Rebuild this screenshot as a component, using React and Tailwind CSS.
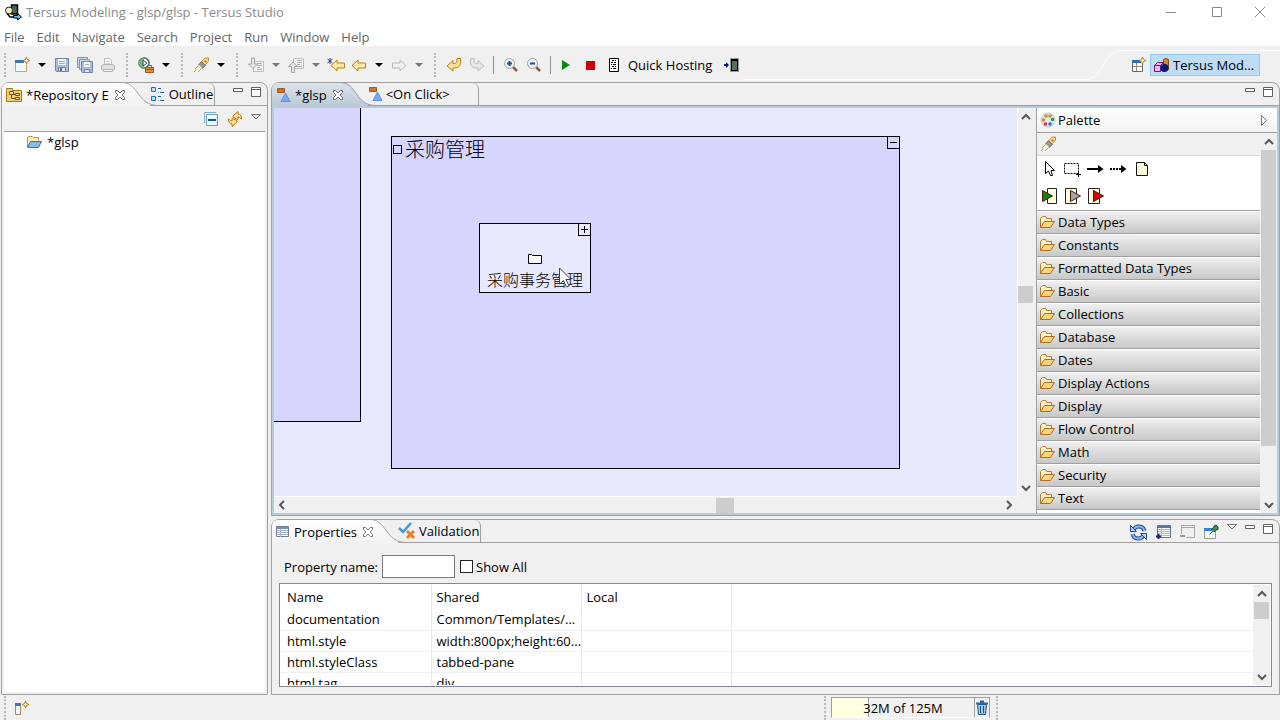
import clsx from 'clsx'

const Svg = ({ w = 16, h = 16, className, children }) => (
  <svg
    width={w}
    height={h}
    viewBox={`0 0 ${w} ${h}`}
    fill="none"
    aria-hidden="true"
    className={clsx('shrink-0', className)}
  >
    {children}
  </svg>
)

const Sparkle = ({ x, y }) => (
  <path
    d="M3.5 0L4.5 2.5L7 3.5L4.5 4.5L3.5 7L2.5 4.5L0 3.5L2.5 2.5Z"
    transform={`translate(${x} ${y})`}
    fill="#fff3c0"
    stroke="#b8801c"
  />
)

const AppIcon = () => (
  <Svg w={17}>
    <path d="M6.500 1h6v9h-6z" fill="#4a6a58" stroke="#000" strokeWidth="1.500" />
    <circle cx="4" cy="6.500" r="3.500" fill="#f6eab4" stroke="#222" />
    <path d="M2 9.500l3 3.500h5" stroke="#000" strokeWidth="1.500" />
    <path d="M8.500 11.500h4v-2l4 3.500-4 3v-2h-4z" fill="#6bb5f0" stroke="#000" />
  </Svg>
)

const NewIcon = () => (
  <Svg>
    <path d="M1.500 3.500h11v11h-11z" fill="#eef8ff" stroke="#c4a468" />
    <path d="M1 3h9v3H1z" fill="#3a78b8" />
    <path d="M2 6h10v2H2z" fill="#fff" />
    <Sparkle x={9} y={0} />
  </Svg>
)

const SaveIcon = () => (
  <Svg>
    <path d="M1.500 1.500h13v13h-12l-1-1z" fill="#a8bedc" stroke="#6e84a8" />
    <path d="M4 2h8v6H4z" fill="#f4f6f8" />
    <path d="M5 4.500h6M5 6.500h6" stroke="#a8acb4" />
    <path d="M4.500 10.500h7v4h-7z" fill="#e4e8ee" stroke="#6e84a8" />
    <path d="M6 11h2v3H6z" fill="#5c7298" />
  </Svg>
)

const SaveAllIcon = () => (
  <Svg>
    <path d="M.5 .5h10v10h-10z" fill="#c8d6e8" stroke="#8496b4" />
    <path d="M2.500 2.500h10v10h-10z" fill="#d8e2ee" stroke="#8496b4" />
    <path d="M4.500 4.500h11v11h-10l-1-1z" fill="#a8bedc" stroke="#6e84a8" />
    <path d="M7 5h6v5H7z" fill="#f4f6f8" />
    <path d="M8 7.500h4" stroke="#a8acb4" />
    <path d="M7.500 12.500h5v3h-5z" fill="#e4e8ee" stroke="#6e84a8" />
  </Svg>
)

const PrintIcon = () => (
  <Svg>
    <path d="M4.500 7.500v-6h5l2 2v4" fill="#fafafa" stroke="#bababa" />
    <path d="M6 4.500h4M6 6.500h4" stroke="#d0d0d0" />
    <path d="M1.500 8.500l2-1h9l2 1v4h-13z" fill="#e2e2e2" stroke="#b4b4b4" />
    <path d="M3.500 12.500h9v2h-9z" fill="#f4f4f4" stroke="#b4b4b4" />
  </Svg>
)

const RunExternalIcon = () => (
  <Svg>
    <circle cx="6" cy="6" r="5" fill="#fff" stroke="#3c6a54" strokeWidth="1.500" />
    <path d="M6 1a5 5 0 0 0 0 10z" fill="#7cb48c" />
    <path d="M5 3l4 3-4 3z" fill="#fff" stroke="#28503c" />
    <path d="M7.500 10.500h8v5h-8z" fill="#e09040" stroke="#a05420" />
    <path d="M9.500 10v-1.500h4V10M8 12.500h7" stroke="#a05420" />
  </Svg>
)

const RocketIcon = () => (
  <Svg>
    <path d="M9 4.500l3-3.500h3.500v3l-3 3.500-3 2L7 7z" fill="#fbd688" stroke="#d08c38" />
    <path d="M5.500 8l3-3.500 4 4L9 11.500z" fill="#98949c" stroke="#84705c" />
    <path d="M6 8l3 3-3.500 3L1 15l2-4.500z" fill="#fff6d0" />
    <path d="M5.500 8.500L2 12M8.500 11.500L5 15M3.500 12.500L1 15" stroke="#d89040" />
    <circle cx="12.500" cy="4.500" r="1" fill="#9c6844" />
  </Svg>
)

const AnnotationIcon = ({ up }) => (
  <Svg>
    <path d={up ? 'M5.500 1.500h10v10h-10z' : 'M5.500 4.500h10v10h-10z'} fill="#f4f4f4" stroke="#c0c0c0" />
    <path d={up ? 'M9 3.500h5M9 5.500h5M9 7.500h3M9 9.500h5' : 'M9 6.500h5M9 8.500h5M9 10.500h3M9 12.500h5'} stroke="#b0b0b0" />
    <path
      d={up ? 'M5 5L.5 9.500H3.500v6h3v-6h3z' : 'M3.500 1h3v6h3L5 11.500.5 7h3z'}
      fill="#e6e6e6"
      stroke="#a4a4a4"
    />
  </Svg>
)

const BackIcon = ({ star }) => (
  <Svg w={18}>
    <path
      d="M2 8.500L8 3v3h7.500v5H8v3z"
      transform={star ? 'translate(2 0)' : undefined}
      fill="#fdeaa4"
      stroke="#bc801c"
    />
    {star && <path d="M3 1v6M.5 2l5 4M5.500 2l-5 4" stroke="#283c80" />}
  </Svg>
)

const ForwardIcon = () => (
  <Svg>
    <path d="M15 8.500L9 3v3H1.500v5H9v3z" fill="#f0f0f0" stroke="#b8b8b8" />
  </Svg>
)

const ReturnIcon = ({ flip }) => (
  <Svg>
    <path
      d="M1 9l6-5.500v3h1.500q2.500 0 2.500-5h3.500q1.500 9.500-6 9.500H7V14z"
      transform={flip ? 'matrix(-1 0 0 1 16 0)' : undefined}
      fill={flip ? '#e6e6e6' : '#fce08c'}
      stroke={flip ? '#bcbcbc' : '#bc801c'}
    />
  </Svg>
)

const ZoomIcon = ({ minus }) => (
  <Svg>
    <path d="M10 10l4 4" stroke="#8a5a4c" strokeWidth="2.500" />
    <circle cx="6.500" cy="6.500" r="5" fill="#e8f2fa" stroke="#a8a098" />
    <path d={minus ? 'M4 6.500h5' : 'M4 6.500h5M6.500 4v5'} stroke="#1c4c94" strokeWidth="2" />
  </Svg>
)

const PlayIcon = () => (
  <Svg>
    <path d="M2 3l8 5-8 5z" fill="#0a8a0a" />
  </Svg>
)

const StopIcon = () => (
  <Svg>
    <path d="M3 4h9v9H3z" fill="#cc0000" />
  </Svg>
)

const ServerIcon = () => (
  <Svg w={12}>
    <path d="M1.500 1.500h9v13h-9z" fill="#fff" stroke="#000" />
    <path d="M4 3.500h2M7 3.500h1M3 5.500h2M6 5.500h2M3 7.500h1M5 7.500h3M4 9.500h2M7 9.500h1M3 11.500h1M5 11.500h3" stroke="#000" />
  </Svg>
)

const DoorIcon = () => (
  <Svg>
    <path d="M6.500 1.500h8v13h-8z" fill="#000" stroke="#999" />
    <path d="M8 4h5v9H8z" fill="#52705c" />
    <path d="M0 7h2V5l3 3-3 3V9H0z" fill="#001080" />
  </Svg>
)

const OpenPerspectiveIcon = () => (
  <Svg>
    <path d="M1.500 4.500h10v10h-10z" fill="#fff" stroke="#5c6c70" />
    <path d="M1 3h9v3H1z" fill="#3070b0" />
    <path d="M5.500 6v8M2 9.500h9" stroke="#988c78" />
    <Sparkle x={8} y={0} />
  </Svg>
)

const PerspectiveIcon = () => (
  <Svg w={17}>
    <path d="M10.500 2.500q2.500-2 5 0v10h-5z" fill="#d4862c" stroke="#8c4808" />
    <path d="M1.500 8.500l3-3h6v6l-3 3h-6z" fill="#eab8ea" stroke="#7c1478" />
    <path d="M1.500 8.500h6v6M7.500 8.500l3-3" stroke="#7c1478" />
    <circle cx="11.500" cy="11" r="4" fill="#0c1480" />
  </Svg>
)

const RepositoryIcon = () => (
  <Svg>
    <path d="M.5 3.500v-2h6v2h9v11H.5z" fill="#f4cf70" stroke="#a8781c" />
    <path d="M3.500 4.500h4v3h-4zM9.500 6.500h4v2h-4zM9.500 10.500h4v2h-4z" fill="#f8e8b8" stroke="#605428" />
    <path d="M5.500 8v3.500H9M6 7.500h3" stroke="#605428" />
  </Svg>
)

const OutlineIcon = () => (
  <Svg>
    <path d="M1.500 1.500h4v4h-4zM1.500 10.500h4v4h-4z" fill="#c0e0f4" stroke="#1874b4" />
    <path d="M8 2.500h3M10 6.500h4M8 10.500h3M10 14.500h4" stroke="#286090" />
    <path d="M8 6.500h1M8 14.500h1" stroke="#58aee0" />
  </Svg>
)

const CollapseIcon = () => (
  <Svg>
    <path d="M1.500 12V1.500H13" stroke="#88b0c4" />
    <path d="M3.500 3.500h11v11h-11z" fill="#e8f8ff" stroke="#7c9cb0" />
    <path d="M5 9h8" stroke="#0c5894" strokeWidth="2" />
  </Svg>
)

const LinkIcon = () => (
  <Svg>
    <path d="M6 6.500V5l5-4.500V3q4 1 3.500 5l-2-1.500L11 6v2.500z" fill="#fbe08c" stroke="#b87c18" />
    <path d="M10 9.500V11l-5 4.500V13Q1 12 1.500 8l2 1.500L5 10V7.500z" fill="#fbe08c" stroke="#b87c18" />
  </Svg>
)

const ProjectIcon = () => (
  <Svg>
    <path d="M1.500 13V3.500l1-1h4l1 1h5v3" fill="#fceec0" stroke="#b8904c" />
    <path d="M1.500 13.500l3-6h11l-3 6z" fill="#88bce8" stroke="#3c70a8" />
  </Svg>
)

const ModelIcon = () => (
  <Svg w={15}>
    <path d="M1.500 1.500h7v4h-7z" fill="#c8742c" stroke="#a4581c" />
    <path d="M9.500 6l4.500 8.500h-9z" fill="#78a8f8" stroke="#6090e4" />
  </Svg>
)

const CloseIcon = () => (
  <Svg w={12} h={12}>
    <path
      d="M1.500 1.500h2l2.500 2.500 2.500-2.500h2v2L8 6l2.500 2.500v2h-2L6 8l-2.500 2.500h-2v-2L4 6 1.500 3.500z"
      fill="#fff"
      stroke="#707070"
    />
  </Svg>
)

const MinimizeIcon = () => (
  <Svg w={10} h={10}>
    <path d="M.5 1.500h9v3h-9z" fill="#fff" stroke="#606060" />
  </Svg>
)

const MaximizeIcon = () => (
  <Svg w={10} h={10}>
    <path d="M.5 .5h9v9h-9zM1 2.500h8" fill="#fff" stroke="#606060" />
  </Svg>
)

const ViewMenuIcon = () => (
  <Svg w={10} h={10}>
    <path d="M.5 .5h9L5 5z" fill="#fff" stroke="#707070" />
  </Svg>
)

const PaletteIcon = () => (
  <Svg>
    <circle cx="8" cy="8" r="7" fill="#dcebf6" stroke="#b4cce0" />
    <g strokeWidth="1.500" fill="#fff">
      <circle cx="6" cy="4" r="1" stroke="#d4881c" />
      <circle cx="10" cy="4" r="1" stroke="#d4881c" />
      <circle cx="3.500" cy="8" r="1" stroke="#d4881c" />
      <circle cx="12.500" cy="7.500" r="1" stroke="#388c38" />
      <circle cx="5.500" cy="12" r="1" stroke="#d03030" />
      <circle cx="10" cy="12" r="1" stroke="#3060c0" />
    </g>
  </Svg>
)

const FolderIcon = () => (
  <Svg>
    <path d="M1.500 13.500v-9l2-2h3l1 2h5v3" fill="#fff2c4" stroke="#bc7830" />
    <path d="M1.500 13.500l4-6h10l-4 6z" fill="#fcd47c" stroke="#b06c24" />
  </Svg>
)

const PointerIcon = () => (
  <Svg>
    <path d="M3.500 .5v12l3-2.500L8.500 14.500h2L9 9.500h3.500z" fill="#fff" stroke="#000" />
  </Svg>
)

const MarqueeIcon = () => (
  <Svg w={20}>
    <path d="M1.500 2.500h14v10h-14z" stroke="#000" strokeDasharray="2 1" />
    <path d="M13 13.500h5M15.500 11v5" stroke="#000" />
  </Svg>
)

const FlowIcon = ({ dashed }) => (
  <Svg w={17}>
    <path d="M0 8h12" stroke="#000" strokeWidth="2" strokeDasharray={dashed ? '2 1' : undefined} />
    <path d="M11 4l5.500 4-5.500 4z" fill="#000" />
  </Svg>
)

const NoteIcon = () => (
  <Svg>
    <path d="M2.500 1.500h8l3 3v10h-11zM10.500 1.500v3h3" fill="#ffffe0" stroke="#111" />
  </Svg>
)

const BOX_RIGHT = 'M6.500 .5h9v15h-9z'
const BOX_LEFT = 'M1.500 .5h11v15h-11z'

const SlotIcon = ({ fill, box }) => (
  <Svg w={17}>
    <path d={box} fill="#ffffe0" stroke="#222" />
    <path
      d={box === BOX_RIGHT ? 'M1.500 2.500l10 5.500-10 5.500z' : 'M6.500 2.500l10 5.500-10 5.500z'}
      fill={fill}
      stroke="#501818"
    />
  </Svg>
)

const TableIcon = () => (
  <Svg w={14} h={12}>
    <path d="M.5 .5h12v10H.5z" fill="#fff" stroke="#707c90" />
    <path d="M1 2h11" stroke="#7c90b0" strokeWidth="2" />
    <path d="M1 4.500h11M1 6.500h11M1 8.500h11M4.500 3v8" stroke="#a4b0c4" />
  </Svg>
)

const ValidationIcon = () => (
  <Svg w={18} h={18}>
    <path d="M1 6l4 4 8-9" stroke="#3c98dc" strokeWidth="2.500" />
    <path d="M9 9l7 7M16 9l-7 7" stroke="#dc8430" strokeWidth="3" />
  </Svg>
)

const RefreshIcon = () => (
  <Svg w={17} h={17}>
    <path d="M3.500 6A5.800 5.800 0 0 1 14.500 7M13.500 11A5.800 5.800 0 0 1 2.500 10" stroke="#24489c" strokeWidth="4" />
    <path d="M3.500 6A5.800 5.800 0 0 1 14.500 7M13.500 11A5.800 5.800 0 0 1 2.500 10" stroke="#88b8ec" strokeWidth="2" />
    <path d="M.5 1.500v6h6zM16.500 15.500v-6h-6z" fill="#b8d4f4" stroke="#24489c" />
  </Svg>
)

const AddPropertyIcon = () => (
  <Svg>
    <path d="M2.500 1.500h13v12h-13z" fill="#fff" stroke="#607898" />
    <path d="M3 3h12" stroke="#5878a4" strokeWidth="2" />
    <path d="M3 5.500h12M3 7.500h12M3 9.500h12M3 11.500h12M6.500 4v9" stroke="#b0b8c8" />
    <path d="M1 12.500h5M3.500 10v5" stroke="#1c2484" strokeWidth="2" />
  </Svg>
)

const RemovePropertyIcon = () => (
  <Svg>
    <path d="M2.500 10V1.500h13v12H7M3 3.500h12" stroke="#a8a8a8" />
    <path d="M1 12h5" stroke="#989898" strokeWidth="2" />
  </Svg>
)

const PinIcon = () => (
  <Svg>
    <path d="M1.500 4.500h11v10h-11z" fill="#ecf6ff" stroke="#a89c80" />
    <path d="M1 4h8v3H1z" fill="#3c80d0" />
    <path d="M6.500 10.500L10 7" stroke="#444" />
    <path d="M8.500 5l3 3 1.500-2 2-.5V3l-2-2-2 1-.5 1.500z" fill="#3c9048" stroke="#244c30" />
  </Svg>
)

const TrashIcon = () => (
  <Svg w={14}>
    <path d="M2.500 4.500h9l-1 10h-7z" fill="#a8c8dc" stroke="#1c508c" />
    <path d="M1 3.500h12M5 1.500h4" stroke="#2868a8" strokeWidth="2" />
    <path d="M5.500 6v7M8.500 6v7" stroke="#1c508c" />
  </Svg>
)

const FastViewIcon = () => (
  <Svg>
    <path d="M1.500 3.500h5v11h-5z" fill="#f0f8ff" stroke="#a08c68" />
    <path d="M1 3h6v3H1z" fill="#3c78b4" />
    <Sparkle x={8} y={1} />
  </Svg>
)

const Handle = ({ className }) => (
  <span className={clsx('flex shrink-0 justify-center', className)}>
    <span className="h-6 border-l-2 border-dotted border-[#b8b8b8]" />
  </span>
)

const ToolButton = ({ label, icon: Icon, ...props }) => (
  <button type="button" aria-label={label} className="flex h-6 w-[23px] shrink-0 items-center justify-center">
    <Icon {...props} />
  </button>
)

const DropButton = ({ label, muted }) => (
  <button type="button" aria-label={label} className="flex h-6 w-[17px] shrink-0 items-center justify-center">
    <span
      className={clsx(
        'border-x-4 border-t-4 border-x-transparent',
        muted ? 'border-t-[#777777]' : 'border-t-black'
      )}
    />
  </button>
)

const ViewButton = ({ label, icon: Icon }) => (
  <button type="button" aria-label={label} className="shrink-0">
    <Icon />
  </button>
)

const TitleBar = () => (
  <header className="flex h-7 shrink-0 items-start bg-white text-[#8a8a8a]">
    <div className="flex h-6 flex-1 items-center gap-1 pl-[5px]">
      <AppIcon />
      <h1>Tersus Modeling - glsp/glsp - Tersus Studio</h1>
    </div>
    <div className="flex h-6 items-center">
      <button type="button" aria-label="Minimize window" className="flex w-[46px] justify-center">
        <Svg w={10} h={10}><path d="M0 5.500h10" stroke="#888" /></Svg>
      </button>
      <button type="button" aria-label="Maximize window" className="flex w-[46px] justify-center">
        <Svg w={10} h={10}><path d="M.5 .5h9v9h-9z" stroke="#888" /></Svg>
      </button>
      <button type="button" aria-label="Close window" className="flex w-10 justify-center">
        <Svg w={10} h={10}><path d="M0 0l10 10M10 0L0 10" stroke="#888" /></Svg>
      </button>
    </div>
  </header>
)

const menus = ['File', 'Edit', 'Navigate', 'Search', 'Project', 'Run', 'Window', 'Help']

const MenuBar = () => (
  <nav className="flex h-[18px] shrink-0 items-center gap-3 bg-white pl-1 text-[#666666]">
    {menus.map((menu) => (
      <button key={menu} type="button">{menu}</button>
    ))}
  </nav>
)

const Toolbar = () => (
  <div className="flex h-9 shrink-0">
    <div className="flex shrink-0 items-center pt-[2px]">
      <Handle className="w-[10px]" />
      <ToolButton label="New" icon={NewIcon} />
      <DropButton label="New menu" />
      <ToolButton label="Save" icon={SaveIcon} />
      <ToolButton label="Save all" icon={SaveAllIcon} />
      <ToolButton label="Print" icon={PrintIcon} />
      <Handle className="w-[15px]" />
      <ToolButton label="External tools" icon={RunExternalIcon} />
      <DropButton label="External tools menu" />
      <Handle className="w-[15px]" />
      <ToolButton label="Launch" icon={RocketIcon} />
      <DropButton label="Launch menu" />
      <Handle className="w-[15px]" />
      <ToolButton label="Next annotation" icon={AnnotationIcon} />
      <DropButton label="Next annotation menu" muted />
      <ToolButton label="Previous annotation" icon={AnnotationIcon} up />
      <DropButton label="Previous annotation menu" muted />
      <ToolButton label="Last edit location" icon={BackIcon} star />
      <ToolButton label="Back" icon={BackIcon} />
      <DropButton label="Back menu" />
      <ToolButton label="Forward" icon={ForwardIcon} />
      <DropButton label="Forward menu" muted />
      <Handle className="w-[15px]" />
      <ToolButton label="Undo" icon={ReturnIcon} />
      <ToolButton label="Redo" icon={ReturnIcon} flip />
      <span className="mx-[5px] h-[18px] border-l border-[#909090]" />
      <ToolButton label="Zoom in" icon={ZoomIcon} />
      <ToolButton label="Zoom out" icon={ZoomIcon} minus />
      <span className="mx-[5px] h-[18px] border-l border-[#909090]" />
      <ToolButton label="Start" icon={PlayIcon} />
      <ToolButton label="Stop" icon={StopIcon} />
      <button type="button" className="mr-2 ml-[6px] flex h-6 shrink-0 items-center gap-2">
        <ServerIcon />
        Quick Hosting
      </button>
      <ToolButton label="Exit" icon={DoorIcon} />
    </div>
    <PerspectiveBar />
  </div>
)

const PerspectiveBar = () => (
  <div className="flex h-9 min-w-0 flex-1">
    <div className="h-[34px] flex-1 border-b border-white" />
    <Svg w={38} h={36}>
      <path d="M0 33.500C21 33.500 15 4.500 38 4.500" stroke="#fff" />
    </Svg>
    <div className="mt-1 flex items-center gap-[3px] border-t border-white pr-5 pb-1 pl-2">
      <button type="button" aria-label="Open perspective"><OpenPerspectiveIcon /></button>
      <button
        type="button"
        className="flex h-[22px] w-[110px] items-center gap-[3px] border border-[#90c8f6] bg-[#c0dcf3] pl-[2px]"
      >
        <PerspectiveIcon />
        <span>Tersus Mod...</span>
      </button>
    </div>
  </div>
)

const TabCurve = ({ from, to, id }) => (
  <Svg w={36} h={23} className="-ml-1">
    <defs>
      <linearGradient id={id} x1="0" y1="0" x2="0" y2="1">
        <stop offset="0" stopColor={from} />
        <stop offset="1" stopColor={to} />
      </linearGradient>
    </defs>
    <path d="M4-.5C17-.5 15 22.500 36 22.500V23H4z" fill={`url(#${id})`} />
    <path d="M0-.5C17-.5 15 22.500 36 22.500" stroke="#a0a0a0" />
  </Svg>
)

const TabBar = ({ id, active, activeIcon, inactive, inactiveIcon, tone, children }) => (
  <div className="flex h-[23px] shrink-0">
    <div
      className={clsx(
        'flex items-center gap-1 rounded-tl-md pl-1',
        tone === 'blue' ? 'bg-linear-to-b from-[#dbe3eb] to-[#b9cad8]' : 'bg-linear-to-b from-white to-[#f2f2f2]'
      )}
    >
      {activeIcon}
      <span>{active}</span>
      <button type="button" aria-label={`Close ${active}`} className="ml-px">
        <CloseIcon />
      </button>
    </div>
    {tone === 'blue' ? (
      <TabCurve id={id} from="#dbe3eb" to="#b9cad8" />
    ) : (
      <TabCurve id={id} from="#ffffff" to="#f2f2f2" />
    )}
    <div
      className={clsx(
        '-ml-2 flex items-center gap-[3px] rounded-tr-md border-r border-b border-[#a0a0a0]',
        tone === 'blue' ? 'pr-7' : 'pr-px'
      )}
    >
      {inactiveIcon}
      <span>{inactive}</span>
    </div>
    <div className="flex flex-1 items-start justify-end gap-2 border-b border-[#a0a0a0] pt-1 pr-[6px]">
      {children}
    </div>
  </div>
)

const RepositoryView = () => (
  <section className="ml-px flex w-[267px] shrink-0 flex-col rounded-t-lg border border-[#a0a0a0]">
    <TabBar
      id="repository-tab"
      active="*Repository E"
      activeIcon={<RepositoryIcon />}
      inactive="Outline"
      inactiveIcon={<OutlineIcon />}
    >
      <ViewButton label="Minimize view" icon={MinimizeIcon} />
      <ViewButton label="Maximize view" icon={MaximizeIcon} />
    </TabBar>
    <div className="mx-[2px] flex h-[26px] items-center justify-end gap-2 border-b border-[#a0a0a0] pr-1">
      <ViewButton label="Collapse all" icon={CollapseIcon} />
      <ViewButton label="Link with editor" icon={LinkIcon} />
      <ViewButton label="View menu" icon={ViewMenuIcon} />
    </div>
    <ul className="mx-[2px] mb-[2px] flex-1 bg-white">
      <li className="flex h-5 items-center gap-[5px] pl-[22px]">
        <ProjectIcon />
        *glsp
      </li>
    </ul>
  </section>
)

const arrowPaths = {
  up: 'M1 6l4-4 4 4',
  down: 'M1 2l4 4 4-4',
  left: 'M6 1L2 5l4 4',
  right: 'M2 1l4 4-4 4',
}

const ScrollArrow = ({ direction }) => {
  const vertical = direction === 'up' || direction === 'down'
  return (
    <button
      type="button"
      aria-label={`Scroll ${direction}`}
      className="flex h-[17px] w-4 shrink-0 items-center justify-center"
    >
      <Svg w={vertical ? 10 : 8} h={vertical ? 8 : 10}>
        <path d={arrowPaths[direction]} stroke="#585858" strokeWidth="2" />
      </Svg>
    </button>
  )
}

const ShapeToggle = ({ expanded, label }) => (
  <button
    type="button"
    aria-label={label}
    className={clsx(
      'absolute -top-px -right-px size-[13px] border border-black',
      expanded ? 'bg-[#d5d5fd]' : 'bg-[#e9e9fd]'
    )}
  >
    <Svg w={11} h={11}>
      <path d={expanded ? 'M2 5.500h7' : 'M2 5.500h7M5.500 2v7'} stroke="#000" />
    </Svg>
  </button>
)

const Diagram = () => (
  <div className="relative min-h-0 flex-1 overflow-hidden bg-[#e9e9fd] font-['Noto_Sans_CJK_SC',sans-serif] font-light">
    <div className="absolute -top-1 -left-1 h-[318px] w-[91px] border border-black bg-[#d5d5fd]" />
    <div className="absolute top-7 left-[117px] h-[333px] w-[509px] border border-black bg-[#d5d5fd]">
      <div className="flex h-6 items-center gap-[3px] pl-px text-[20px]">
        <span className="size-[9px] border border-black" />
        采购管理
      </div>
      <ShapeToggle expanded label="Collapse 采购管理" />
      <div className="absolute top-[86px] left-[87px] flex h-[70px] w-[112px] flex-col items-center justify-end border border-black bg-[#e9e9fd] pb-px">
        <ShapeToggle label="Expand 采购事务管理" />
        <Svg w={14} h={12} className="mb-[2px]">
          <path d="M.5 10.500v-9h3l1 1h9v8z" fill="#fff" stroke="#000" />
        </Svg>
        <span className="text-[16px] leading-6">采购事务管理</span>
        <svg
          width="13"
          height="21"
          viewBox="0 0 13 21"
          aria-hidden="true"
          className="absolute top-[43px] left-[79px]"
        >
          <path d="M.5 1v16l4-3.500 3 6.500 2.500-1-3-6.500H12z" fill="#fff" stroke="#444" />
        </svg>
      </div>
    </div>
  </div>
)

const toolRows = [
  [
    { label: 'Select', icon: <PointerIcon /> },
    { label: 'Marquee', icon: <MarqueeIcon /> },
    { label: 'Flow', icon: <FlowIcon /> },
    { label: 'Link', icon: <FlowIcon dashed /> },
    { label: 'Note', icon: <NoteIcon /> },
  ],
  [
    { label: 'Trigger', icon: <SlotIcon fill="#0a840a" box={BOX_RIGHT} /> },
    { label: 'Exit', icon: <SlotIcon fill="#a4a4a4" box={BOX_LEFT} /> },
    { label: 'Error', icon: <SlotIcon fill="#d40808" box={BOX_LEFT} /> },
  ],
]

const drawers = [
  'Data Types',
  'Constants',
  'Formatted Data Types',
  'Basic',
  'Collections',
  'Database',
  'Dates',
  'Display Actions',
  'Display',
  'Flow Control',
  'Math',
  'Security',
  'Text',
]

const Palette = () => (
  <aside className="ml-px flex w-[241px] shrink-0 flex-col border-l border-[#a0a0a0]">
    <div className="flex h-[25px] shrink-0 items-center gap-[2px] border-b border-[#a0a0a0] bg-linear-to-b from-white to-[#f3f3f3] pr-[9px] pl-[3px]">
      <PaletteIcon />
      <h2 className="flex-1">Palette</h2>
      <button type="button" aria-label="Hide palette">
        <Svg w={8} h={11}><path d="M1.500 .5l5 5-5 5z" fill="#fff" stroke="#777" /></Svg>
      </button>
    </div>
    <div className="flex min-h-0 flex-1">
      <div className="flex min-w-0 flex-1 flex-col overflow-hidden bg-white">
        <div className="flex h-[23px] shrink-0 items-center border-b border-[#d8d8d8] bg-[#f0f0f0] pl-[3px]">
          <RocketIcon />
        </div>
        <div className="flex h-[55px] shrink-0 flex-col gap-[2px] border-b border-[#a0a0a0] pl-px">
          {toolRows.map((row) => (
            <div key={row[0].label} className="flex">
              {row.map((tool) => (
                <button
                  key={tool.label}
                  type="button"
                  aria-label={tool.label}
                  className="flex h-[25px] w-[23px] items-center justify-center"
                >
                  {tool.icon}
                </button>
              ))}
            </div>
          ))}
        </div>
        {drawers.map((drawer) => (
          <button
            key={drawer}
            type="button"
            className="flex h-[23px] shrink-0 items-center gap-[3px] border-y border-t-white border-b-[#a0a0a0] bg-linear-to-b from-[#f0f0f0] to-[#c8c8c8] pb-px pl-[2px]"
          >
            <FolderIcon />
            {drawer}
          </button>
        ))}
      </div>
      <div className="flex w-[17px] flex-col items-center">
        <ScrollArrow direction="up" />
        <div className="w-[15px] grow-[296] bg-[#cdcdcd]" />
        <div className="grow-[50]" />
        <ScrollArrow direction="down" />
      </div>
    </div>
  </aside>
)

const EditorArea = () => (
  <section className="flex min-h-0 flex-1 flex-col rounded-t-lg border border-[#a0a0a0]">
    <TabBar
      id="editor-tab"
      tone="blue"
      active="*glsp"
      activeIcon={<ModelIcon />}
      inactive="<On Click>"
      inactiveIcon={<ModelIcon />}
    >
      <ViewButton label="Minimize editor" icon={MinimizeIcon} />
      <ViewButton label="Maximize editor" icon={MaximizeIcon} />
    </TabBar>
    <div className="flex min-h-0 flex-1 border-2 border-[#b9cad8]">
      <div className="flex min-w-0 flex-1 flex-col">
        <Diagram />
        <div className="flex h-[17px] shrink-0 items-center border-t border-white">
          <ScrollArrow direction="left" />
          <div className="grow-[424]" />
          <div className="h-[15px] w-[18px] bg-[#cdcdcd]" />
          <div className="grow-[266]" />
          <ScrollArrow direction="right" />
        </div>
      </div>
      <div className="mb-[17px] flex w-[18px] shrink-0 flex-col items-center border-l border-white pr-[2px]">
        <ScrollArrow direction="up" />
        <div className="grow-[161]" />
        <div className="h-[17px] w-[15px] bg-[#cdcdcd]" />
        <div className="grow-[176]" />
        <ScrollArrow direction="down" />
      </div>
      <Palette />
    </div>
  </section>
)

const properties = [
  { name: 'documentation', shared: 'Common/Templates/...' },
  { name: 'html.style', shared: 'width:800px;height:60...' },
  { name: 'html.styleClass', shared: 'tabbed-pane' },
  { name: 'html.tag', shared: 'div' },
]

const PropertiesView = () => (
  <section className="flex h-44 shrink-0 flex-col rounded-t-lg border border-[#a0a0a0]">
    <TabBar
      id="properties-tab"
      active="Properties"
      activeIcon={<TableIcon />}
      inactive="Validation"
      inactiveIcon={<ValidationIcon />}
    >
      <ViewButton label="Refresh" icon={RefreshIcon} />
      <ViewButton label="Add property" icon={AddPropertyIcon} />
      <ViewButton label="Remove property" icon={RemovePropertyIcon} />
      <ViewButton label="Pin view" icon={PinIcon} />
      <ViewButton label="View menu" icon={ViewMenuIcon} />
      <ViewButton label="Minimize view" icon={MinimizeIcon} />
      <ViewButton label="Maximize view" icon={MaximizeIcon} />
    </TabBar>
    <div className="flex shrink-0 items-center px-3 pt-3 pb-[5px]">
      <label htmlFor="property-name" className="mr-1">Property name:</label>
      <input
        id="property-name"
        type="text"
        className="mr-[5px] h-[23px] w-[73px] border border-[#7a7a7a] bg-white px-1"
      />
      <label className="flex items-center gap-[3px]">
        <input type="checkbox" className="size-[13px] appearance-none border border-[#222222] bg-white" />
        Show All
      </label>
    </div>
    <div className="mx-[7px] mb-[7px] flex min-h-0 flex-1 border border-[#828790] bg-white p-px">
      <div className="min-w-0 flex-1 overflow-hidden">
        <table className="w-full table-fixed border-collapse text-left">
          <thead>
            <tr className="h-6">
              <th className="w-[150px] border-r border-[#e5e5e5] pl-[6px] font-normal">Name</th>
              <th className="w-[150px] border-r border-[#e5e5e5] pl-[5px] font-normal">Shared</th>
              <th className="w-[150px] border-r border-[#e5e5e5] pl-[5px] font-normal">Local</th>
              <th />
            </tr>
          </thead>
          <tbody>
            {properties.map((property) => (
              <tr key={property.name} className="h-[21px] border-b border-[#f0f0f0]">
                <td className="border-r border-[#e4ebf8] pl-[6px]">{property.name}</td>
                <td className="border-r border-[#e4ebf8] pl-[5px]">{property.shared}</td>
                <td className="border-r border-[#e4ebf8]" />
                <td />
              </tr>
            ))}
          </tbody>
        </table>
      </div>
      <div className="flex w-[17px] shrink-0 flex-col items-center bg-[#f0f0f0]">
        <ScrollArrow direction="up" />
        <div className="h-[17px] w-[15px] bg-[#cdcdcd]" />
        <div className="flex-1" />
        <ScrollArrow direction="down" />
      </div>
    </div>
  </section>
)

const StatusBar = () => (
  <footer className="flex h-[25px] shrink-0 items-center">
    <Handle className="w-[10px]" />
    <button type="button" aria-label="Show view" className="ml-1"><FastViewIcon /></button>
    <div className="flex-1" />
    <Handle className="w-3" />
    <div className="flex h-[21px] w-[159px] border border-[#a0a0a0] border-b-white">
      <div className="relative flex flex-1 items-center justify-center border-r border-[#a0a0a0]">
        <span className="absolute inset-y-0 left-0 w-[26%] border-r border-[#a0a0a0] bg-[#ffffe1]" />
        <span className="relative">32M of 125M</span>
      </div>
      <button type="button" aria-label="Run garbage collector"><TrashIcon /></button>
    </div>
    <Handle className="mr-[276px] w-[14px]" />
  </footer>
)

export default function App() {
  return (
    <div className="flex h-screen flex-col overflow-hidden bg-[#f0f0f0] font-['Open_Sans',sans-serif] text-[13px] leading-4 whitespace-nowrap text-black">
      <TitleBar />
      <MenuBar />
      <Toolbar />
      <main className="flex min-h-0 flex-1 gap-[3px]">
        <RepositoryView />
        <div className="flex min-w-0 flex-1 flex-col gap-[3px]">
          <EditorArea />
          <PropertiesView />
        </div>
      </main>
      <StatusBar />
    </div>
  )
}
